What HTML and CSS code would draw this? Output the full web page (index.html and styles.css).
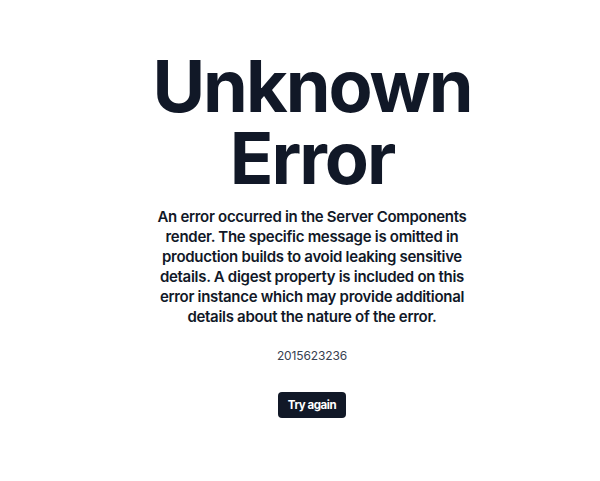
FILE: index.html
```html
<!DOCTYPE html>
<html lang="en">
<head>
<meta charset="utf-8">
<title>Unknown Error</title>
<link rel="stylesheet" href="styles.css">
</head>
<body>
<main class="page">
  <h1 class="title">Unknown Error</h1>
  <p class="message">An error occurred in the Server Components render. The specific message is omitted in production builds to avoid leaking sensitive details. A digest property is included on this error instance which may provide additional details about the nature of the error.</p>
  <p class="digest">2015623236</p>
  <button class="retry" type="button">Try again</button>
</main>
</body>
</html>
```

FILE: styles.css
```css
* { box-sizing: border-box; }
html, body { margin: 0; padding: 0; background: #ffffff; }
body {
  font-family: Inter, "Noto Sans", sans-serif;
  color: #111827;
}
.page {
  display: flex;
  flex-direction: column;
  align-items: center;
  text-align: center;
  padding: 50px 0 0 24px;
}
.title {
  margin: 0;
  font-size: 72px;
  line-height: 1;
  font-weight: 700;
  width: 340px;
  letter-spacing: -0.028em;
}
.message {
  margin: 13px 0 0;
  width: 330px;
  font-size: 15px;
  line-height: 20px;
  font-weight: 600;
  letter-spacing: -0.02em;
}
.digest {
  margin: 21px 0 0;
  font-size: 12px;
  line-height: 16px;
  color: #374151;
  letter-spacing: -0.01em;
}
.retry {
  margin-top: 28px;
  height: 26px;
  padding: 0 10px;
  border: none;
  border-radius: 4px;
  background: #111827;
  color: #ffffff;
  font-family: Inter, "Noto Sans", sans-serif;
  font-size: 11.5px;
  font-weight: 700;
  letter-spacing: -0.04em;
  cursor: pointer;
}
```
